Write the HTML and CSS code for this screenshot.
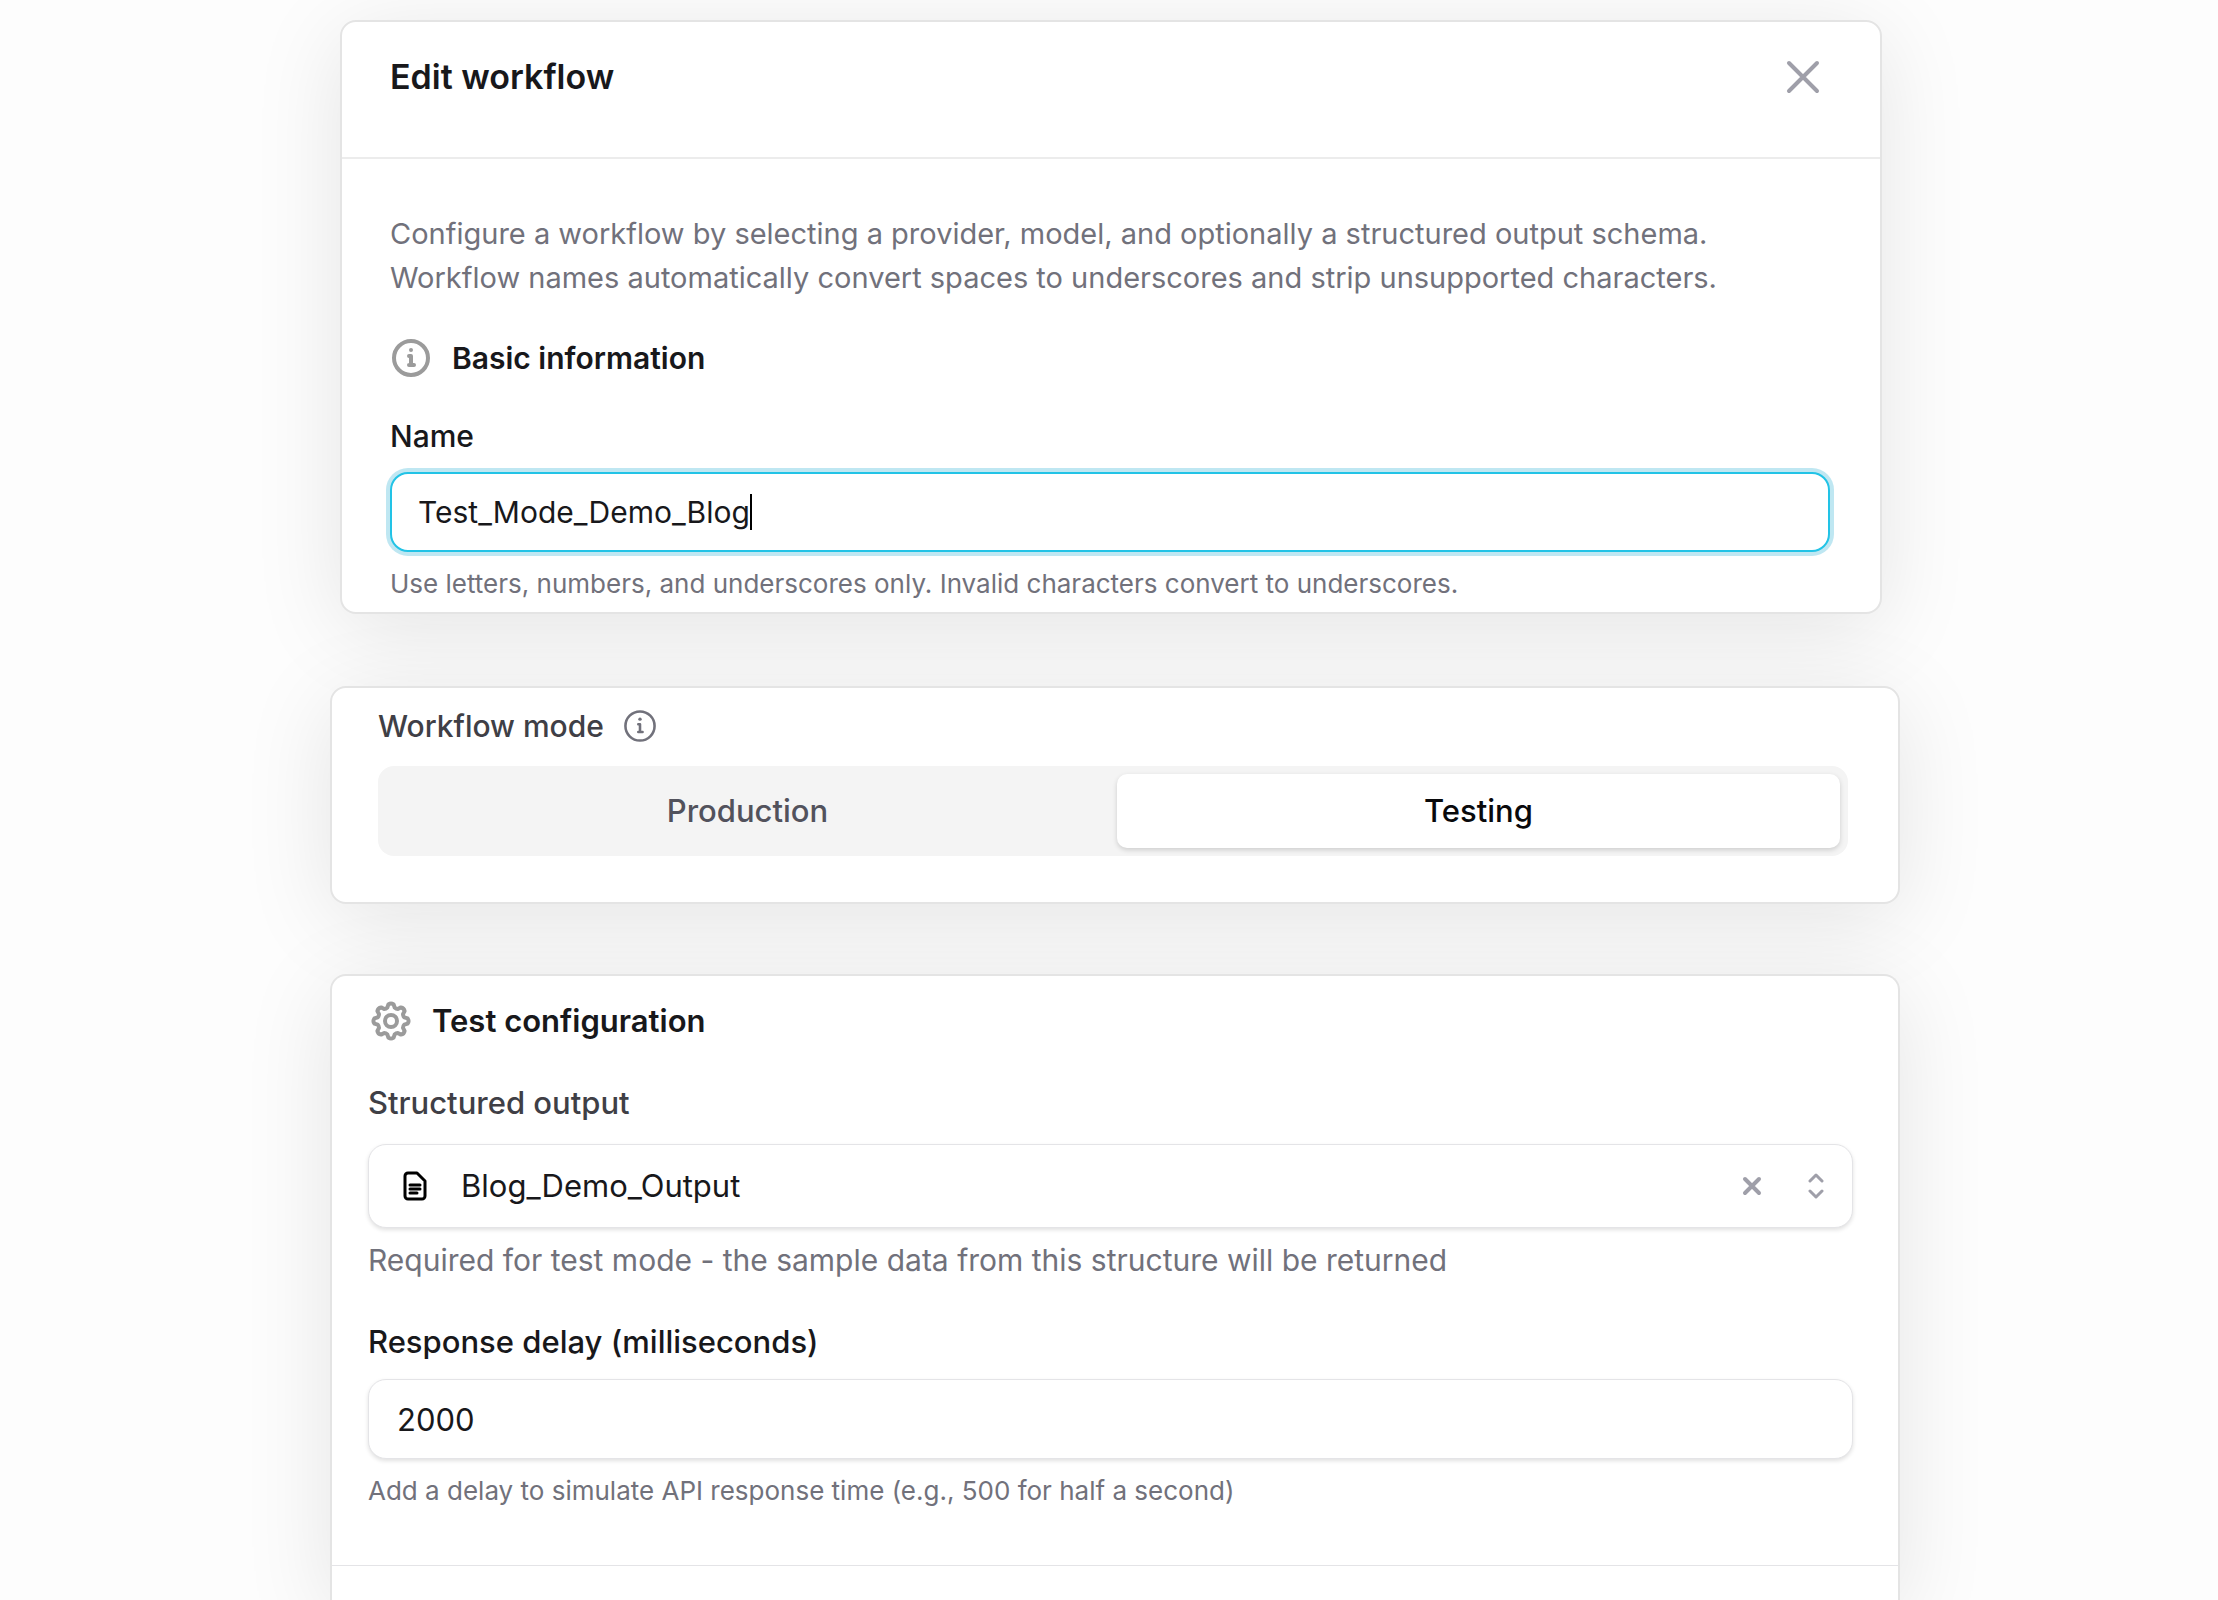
FILE: index.html
```html
<!DOCTYPE html>
<html lang="en">
  <head>
    <meta charset="UTF-8" />
    <meta name="viewport" content="width=device-width, initial-scale=1.0" />
    <title>Edit workflow</title>
    <link rel="stylesheet" href="styles.css">
  </head>
  <body>
    <main class="page">
      <section class="card details">
        <div class="card_header">
          <h1>Edit workflow</h1>
          <button type="button" class="icon_btn" aria-label="Close">
            <svg width="36" height="36" viewBox="0 0 36 36"><path d="M4 4l28 28M32 4L4 32" /></svg>
          </button>
        </div>
        <div class="card_body">
          <p class="intro">
            Configure a workflow by selecting a provider, model, and optionally a structured output schema.<br />
            Workflow names automatically convert spaces to underscores and strip unsupported characters.
          </p>
          <h2 class="heading">
            <svg class="info" width="42" height="42" viewBox="0 0 42 42">
              <circle cx="21" cy="21" r="17" />
              <path d="M19 19h2v8M19 28h5" />
              <circle class="dot" cx="21" cy="13" r="2" />
            </svg>
            Basic information
          </h2>
          <label for="name">Name</label>
          <div class="name_field">
            <input type="text" id="name" name="name" value="Test_Mode_Demo_Blog" />
            <span class="caret"></span>
          </div>
          <p class="hint">Use letters, numbers, and underscores only. Invalid characters convert to underscores.</p>
        </div>
      </section>

      <section class="card mode">
        <div class="mode_label">
          <span id="mode_title">Workflow mode</span>
          <svg class="info" width="36" height="36" viewBox="0 0 42 42">
            <circle cx="21" cy="21" r="17" />
            <path d="M19 19h2v8M19 28h5" />
            <circle class="dot" cx="21" cy="13" r="2" />
          </svg>
        </div>
        <div class="switch" role="group" aria-labelledby="mode_title">
          <button type="button">Production</button>
          <button type="button" class="active">Testing</button>
        </div>
      </section>

      <section class="card config">
        <div class="card_body">
          <h2 class="heading">
            <svg class="gear" width="42" height="42" viewBox="0 0 42 42">
              <circle cx="21" cy="21" r="6" />
              <path d="M37.6 18.4Q39.5 21 37.6 23.6L34.3 24.7Q33 26 33 27.8L34.6 30.9Q34.1 34.1 30.9 34.6L27.8 33Q26 33 24.7 34.3L23.6 37.6Q21 39.5 18.4 37.6L17.3 34.3Q16 33 14.2 33L11.1 34.6Q7.9 34.1 7.4 30.9L9 27.8Q9 26 7.7 24.7L4.4 23.6Q2.5 21 4.4 18.4L7.7 17.3Q9 16 9 14.2L7.4 11.1Q7.9 7.9 11.1 7.4L14.2 9Q16 9 17.3 7.7L18.4 4.4Q21 2.5 23.6 4.4L24.7 7.7Q26 9 27.8 9L30.9 7.4Q34.1 7.9 34.6 11.1L33 14.2Q33 16 34.3 17.3Z" />
            </svg>
            Test configuration
          </h2>
          <label for="output" class="muted">Structured output</label>
          <div class="select_box">
            <svg class="file" width="24" height="30" viewBox="0 0 24 30">
              <path d="M5 2h9l8 8v15a3 3 0 0 1-3 3H5a3 3 0 0 1-3-3V5a3 3 0 0 1 3-3zM7 14h10M7 18h10M7 22h7" />
            </svg>
            <select name="output" id="output">
              <option selected>Blog_Demo_Output</option>
            </select>
            <button type="button" class="icon_btn" aria-label="Clear">
              <svg width="20" height="20" viewBox="0 0 20 20"><path d="M3 3l14 14M17 3L3 17" /></svg>
            </button>
            <svg class="arrows" width="16" height="26" viewBox="0 0 16 26"><path d="M2 8l6-6 6 6M2 18l6 6 6-6" /></svg>
          </div>
          <p class="help">Required for test mode - the sample data from this structure will be returned</p>
          <label for="delay">Response delay (milliseconds)</label>
          <input type="text" inputmode="numeric" id="delay" name="delay" value="2000" />
          <p class="hint">Add a delay to simulate API response time (e.g., 500 for half a second)</p>
        </div>
        <div class="card_footer"></div>
      </section>
    </main>
  </body>
</html>
```

FILE: styles.css
```css
* {
  margin: 0;
  padding: 0;
  box-sizing: border-box;
}

body {
  font-family: Inter, "Liberation Sans", sans-serif;
  font-size: 30px;
  line-height: 44px;
  color: #18181b;
  background-color: #fdfdfd;
}

svg {
  display: block;
  flex: none;
  fill: none;
  stroke: currentColor;
  stroke-width: 3;
  stroke-linecap: round;
  stroke-linejoin: round;
}

input,
select,
button {
  font: inherit;
  color: inherit;
  border: none;
  background: none;
}

.page {
  display: flex;
  flex-direction: column;
  padding: 20px 318px 0 330px;
}

.card {
  border: 2px solid #e4e4e4;
  border-radius: 16px;
  background-color: #fff;
  box-shadow: 0 16px 90px rgba(0, 0, 0, 0.1);
}

.details {
  margin: 0 18px 72px 10px;
}

.card_header {
  display: flex;
  justify-content: space-between;
  padding: 33px 59px 58px 48px;
  border-bottom: 2px solid #ececec;
}

h1 {
  font-size: 34px;
  font-weight: 600;
}

.icon_btn {
  color: #9f9fa9;
  cursor: pointer;
}

.icon_btn svg {
  stroke-width: 4;
}

.details .card_body {
  padding: 53px 50px 6px 48px;
}

.intro,
.help,
.hint {
  color: #71717b;
}

.intro {
  font-size: 29px;
}

.heading {
  display: flex;
  align-items: center;
  gap: 20px;
  font-size: 30px;
  font-weight: 600;
}

.heading svg {
  color: #9b9b9b;
  stroke-width: 4;
}

.details .heading {
  margin: 36px 0 34px;
}

.info .dot {
  fill: currentColor;
  stroke: none;
}

label {
  display: block;
  font-weight: 500;
}

.muted,
.mode_label {
  font-weight: 500;
  color: #3f3f46;
}

input,
.select_box {
  width: 100%;
  height: 80px;
  padding: 0 28px;
  border: 1px solid #e4e4e7;
  border-radius: 18px;
  background-color: #fff;
  box-shadow: 0 2px 4px rgba(0, 0, 0, 0.12);
}

.name_field {
  position: relative;
  margin-top: 14px;
}

.name_field input {
  padding: 0 26px;
  border: 2px solid #22c3e6;
  box-shadow: 0 0 0 4px #bfe7f2;
  outline: none;
}

.caret {
  position: absolute;
  top: 22px;
  left: 360px;
  width: 2px;
  height: 36px;
  background-color: #000;
}

.hint {
  margin-top: 10px;
  font-size: 26px;
}

.mode {
  margin-bottom: 70px;
  padding: 16px 50px 46px 46px;
}

.mode_label {
  display: flex;
  align-items: center;
  gap: 18px;
}

.mode_label svg {
  color: #71717b;
}

.switch {
  display: grid;
  grid-template-columns: 1fr 1fr;
  gap: 8px;
  margin-top: 18px;
  padding: 8px;
  border-radius: 16px;
  background-color: #f4f4f4;
}

.switch button {
  height: 74px;
  border-radius: 10px;
  font-weight: 500;
  color: #52525c;
}

.switch .active {
  background-color: #fff;
  color: #09090b;
  box-shadow: 0 2px 5px rgba(0, 0, 0, 0.16);
}

.config {
  border-bottom: none;
  border-radius: 16px 16px 0 0;
}

.config .card_body {
  padding: 23px 45px 52px 36px;
}

.config .heading {
  padding-left: 2px;
}

.config .heading,
.config label,
.config input,
.config select,
.switch {
  font-size: 31px;
}

.config .muted {
  margin: 38px 0 19px;
}

.select_box {
  display: flex;
  align-items: center;
  height: 84px;
  padding: 0 28px 0 34px;
}

.select_box select {
  flex: 1;
  margin: 0 34px;
  appearance: none;
}

.select_box .arrows {
  margin-left: 46px;
  color: #9f9fa9;
}

.file {
  color: #000;
}

.help {
  margin: 10px 0 38px;
}

.config input {
  margin-top: 15px;
}

.card_footer {
  height: 35px;
  border-top: 1px solid #e4e4e7;
}
```
